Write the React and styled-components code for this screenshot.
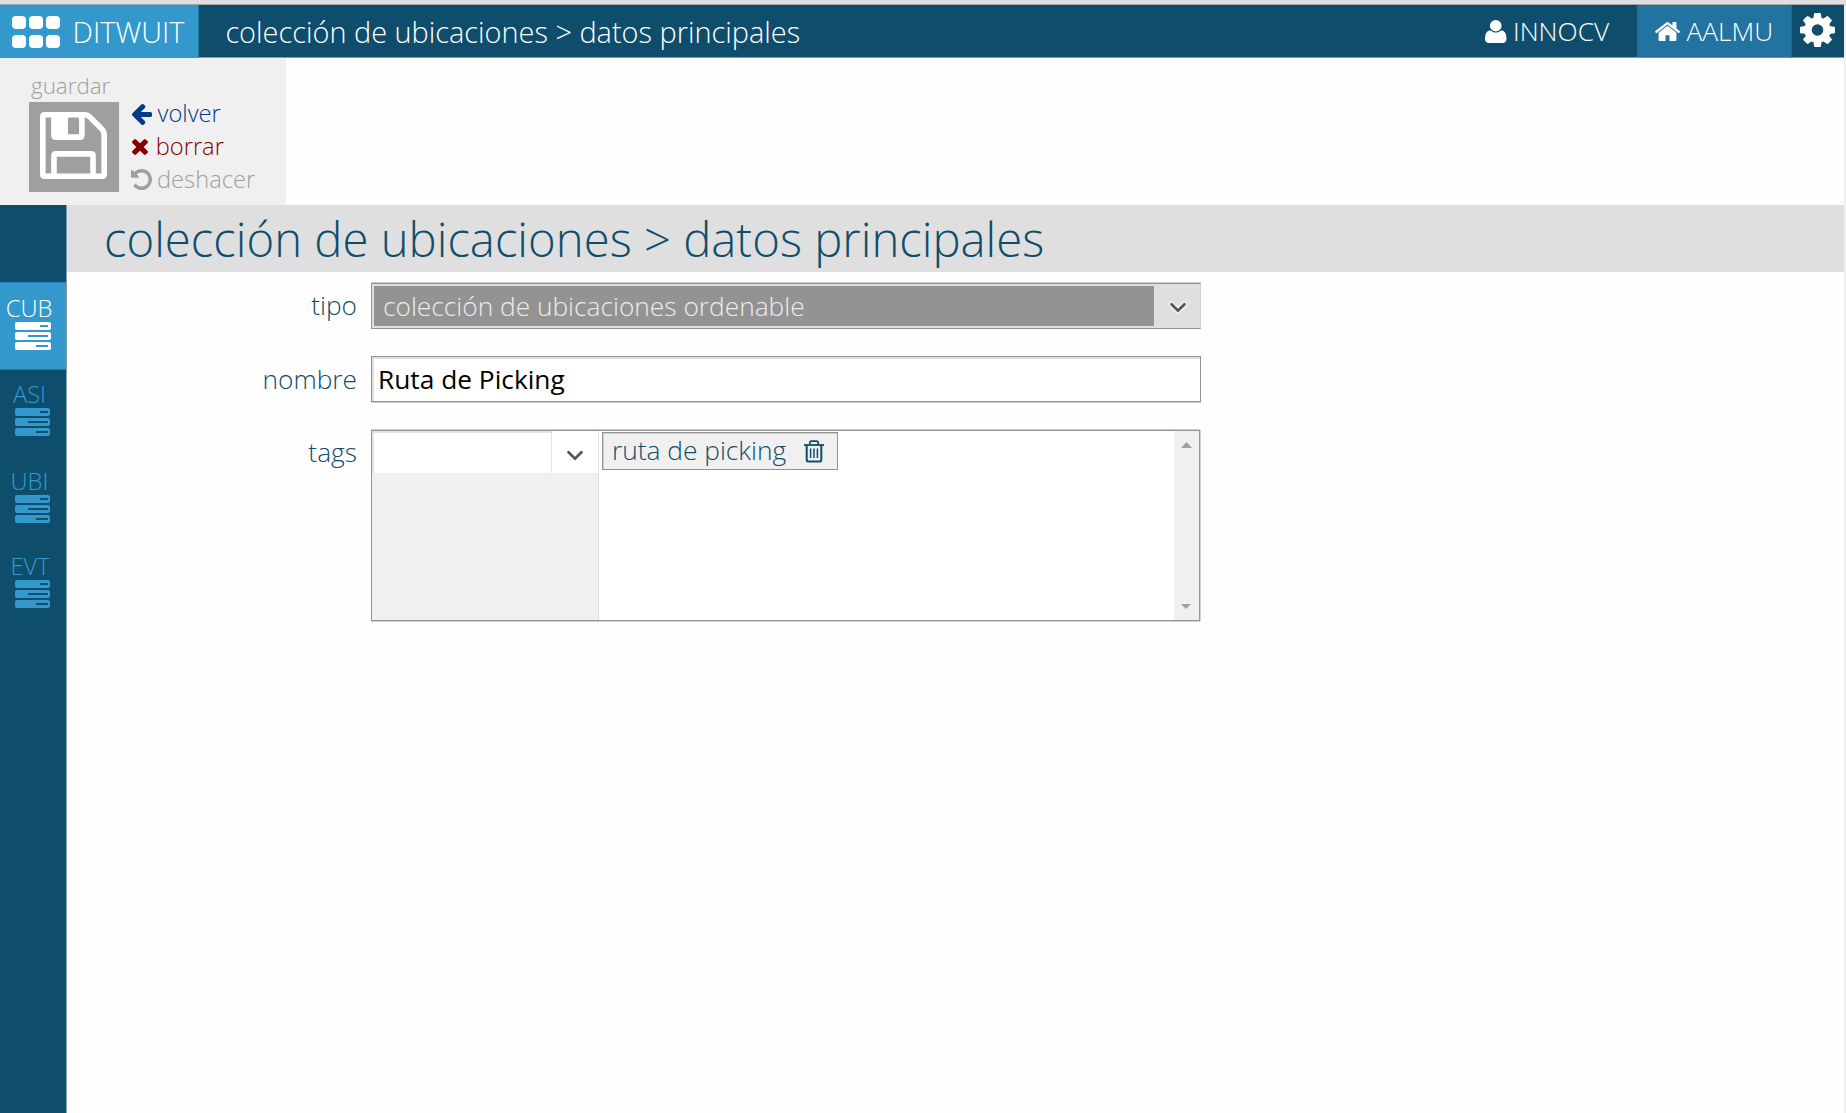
import React from 'react';
import styled, { createGlobalStyle } from 'styled-components';

const navy = '#0f4d6d';
const sky = '#3399cc';

const GlobalStyle = createGlobalStyle`
  *, *::before, *::after { box-sizing: border-box; }
  html, body { margin: 0; padding: 0; }
  body {
    background: #fff;
    font-family: "Open Sans", "Noto Sans", sans-serif;
    font-weight: 300;
    overflow: hidden;
  }
  svg { display: block; flex: none; }
`;

const Page = styled.div`
  display: flex;
  flex-direction: column;
  width: 1846px;
  height: 1113px;
  border-top: 4px solid #dfdfdf;
  background: #fefefe;
`;

const Shell = styled.div`
  flex: 1;
  display: flex;
  flex-direction: column;
  border-top: 1px solid #a3a7a9;
  border-right: 2px solid #f0f0f0;
  min-height: 0;
`;

const Header = styled.header`
  display: flex;
  height: 53px;
  color: #fff;
  background: linear-gradient(${navy} 52px, #7f9eae 52px);
  white-space: nowrap;
`;

const Brand = styled.div`
  display: flex;
  width: 199px;
  padding-left: 12px;
  background: ${sky};
  border-right: 1px solid #257aa4;
  font-size: 28.9px;
  line-height: 53px;
`;

const AppGrid = styled.div`
  display: grid;
  grid-template-columns: repeat(3, 14px);
  grid-auto-rows: 13.4px;
  gap: 5.6px 3px;
  margin: 10.6px 12.6px 0 0;
`;

const AppDot = styled.span`
  border-radius: 4px;
  background: #fff;
`;

const Crumb = styled.div`
  flex: 1;
  padding-left: 26.4px;
  font-size: 28.9px;
  line-height: 53px;
`;

const HeaderItem = styled.div`
  display: flex;
  width: ${p => p.$width}px;
  padding-left: ${p => p.$pad}px;
  gap: ${p => p.$gap || 0}px;
  font-size: 26.3px;
  line-height: 52px;
  ${p => p.$active && `
    background: #22739f;
    border-right: 1px solid #1d658c;
    border-bottom: 1px solid #5e95b2;
  `}
`;

const IconBox = styled.span`
  display: block;
  padding-top: ${p => p.$top}px;
`;

const Toolbar = styled.section`
  display: flex;
  gap: 12px;
  width: 286px;
  height: 147px;
  padding-left: 29px;
  background: #f0f0f0;
`;

const SaveColumn = styled.div`
  padding-top: 11px;
  color: #9f9f9f;
  font-size: 22.4px;
  line-height: 33px;
`;

const SaveLabel = styled.div`
  padding-left: 2px;
`;

const SaveTile = styled.div`
  display: flex;
  justify-content: center;
  width: 90px;
  height: 90px;
  padding: 10px 1px 0 0;
  background: #9f9f9f;
  color: #fff;
`;

const Actions = styled.div`
  display: flex;
  flex-direction: column;
  padding-top: 39px;
`;

const Action = styled.div`
  display: flex;
  align-items: center;
  height: 33px;
  color: ${p => p.$color};
  font-size: 23.7px;
  line-height: 33px;
`;

const ActionIcon = styled.span`
  display: flex;
  width: ${p => p.$width}px;
  padding: ${p => p.$top || 0}px 0 0 ${p => p.$left || 0}px;
`;

const Body = styled.div`
  flex: 1;
  display: flex;
  min-height: 0;
`;

const Nav = styled.nav`
  width: 67px;
  padding-top: 77px;
  background: ${navy};
  border-right: 1px solid #7c9eae;
`;

const NavItem = styled.div`
  height: ${p => p.$height}px;
  padding-top: 10px;
  color: ${p => (p.$active ? '#fff' : sky)};
  background: ${p => (p.$active ? sky : 'transparent')};
  box-shadow: ${p => (p.$active ? 'inset 0 1px #2887b6, inset 0 -1px #2478a4' : 'none')};
  margin-bottom: ${p => (p.$active ? -2 : 0)}px;
`;

const NavLabel = styled.div`
  width: ${p => p.$width}px;
  text-align: center;
  font-size: 23.7px;
  line-height: 32px;
  height: 30px;
`;

const ServerStack = styled.div`
  display: flex;
  flex-direction: column;
  gap: 2px;
  width: 36px;
  margin-left: ${p => (p.$active ? 14.5 : 15)}px;
`;

const ServerBar = styled.span`
  display: flex;
  justify-content: flex-end;
  align-items: center;
  height: 8px;
  width: ${p => (p.$active ? 36 : 35)}px;
  padding-right: ${p => (p.$active ? 3 : 2)}px;
  border-radius: 2px;
  background: currentColor;
`;

const ServerSlot = styled.i`
  width: ${p => p.$width}px;
  height: 2px;
  background: ${p => (p.$active ? sky : navy)};
`;

const Main = styled.main`
  flex: 1;
  min-width: 0;
`;

const Title = styled.h1`
  margin: 0;
  height: 67px;
  padding-left: 37px;
  background: #dfdfdf;
  color: ${navy};
  font-size: 47.27px;
  font-weight: 300;
  line-height: 67px;
  white-space: nowrap;
`;

const Form = styled.div`
  display: grid;
  grid-template-columns: 290px 830px;
  column-gap: 14px;
  row-gap: 27px;
  padding-top: 10px;
`;

const Label = styled.label`
  color: ${navy};
  font-size: 26.3px;
  line-height: 46px;
  text-align: right;
`;

const Select = styled.div`
  display: flex;
  height: 46px;
  margin-top: 1px;
  border: 1px solid #939393;
  border-right-color: #d0d0d0;
  box-shadow: 0 -1px #cfcfcf;
  background: #dfdfdf;
`;

const SelectValue = styled.div`
  width: 780px;
  height: 40px;
  margin: 2px 0 0 2px;
  padding-left: 9px;
  background: #939393;
  color: #ececec;
  font-size: 26.3px;
  line-height: 41px;
`;

const SelectArrow = styled.div`
  display: flex;
  flex: 1;
  justify-content: center;
  padding: 17px 0 0 1px;
`;

const Field = styled.div`
  height: 46px;
  border: 1px solid #939393;
  box-shadow: inset 2px 2px #dfdfdf, 0 1px #d0d0d0;
  padding-left: 6px;
  color: #000;
  background: #fff;
  font-size: 26.3px;
  font-weight: 400;
  line-height: 44px;
`;

const TagBox = styled.div`
  display: flex;
  width: 829px;
  height: 191px;
  margin-top: 1px;
  border: 1px solid #939393;
  box-shadow: 0 -1px #cfcfcf, 0 1px #d0d0d0, 1px 0 #d0d0d0;
  background: #fff;
`;

const TagPicker = styled.div`
  width: 227px;
  background: #f0f0f0;
  border-right: 1px solid #dfdfdf;
`;

const TagCombo = styled.div`
  display: flex;
  height: 42px;
  background: #fff;
`;

const TagInput = styled.div`
  width: 180px;
  border: solid #e3e3e3;
  border-width: 2px 1px 0 2px;
`;

const TagArrow = styled.div`
  display: flex;
  flex: 1;
  justify-content: center;
  padding-top: 17.6px;
`;

const TagList = styled.div`
  flex: 1;
  padding: 1px 0 0 3px;
`;

const Tag = styled.div`
  display: flex;
  justify-content: space-between;
  width: 236px;
  height: 38px;
  padding: 0 13px 0 9px;
  border: 1px solid #939393;
  box-shadow: inset 1px 1px #cfcfcf;
  background: #f0f0f0;
  color: ${navy};
  font-size: 26.3px;
  line-height: 34px;
`;

const ScrollTrack = styled.div`
  display: flex;
  flex-direction: column;
  justify-content: space-between;
  align-items: center;
  width: 25px;
  padding: 11px 1px 11px 0;
  background: #f0f0f0;
`;

const shapes = {
  arrow: ['192 181 1472 1558', 'M1664 896v128q0 53-32.5 90.5t-84.5 37.5h-704l293 294q38 36 38 90t-38 90l-75 76q-37 37-90 37-52 0-91-37l-651-652q-37-37-37-90 0-52 37-91l651-650q38-38 91-38 52 0 90 38l75 74q38 38 38 91t-38 91l-293 293h704q52 0 84.5 37.5t32.5 90.5z'],
  times: ['302 366 1188 1188', 'M1490 1322q0 40-28 68l-136 136q-28 28-68 28t-68-28l-294-294-294 294q-28 28-68 28t-68-28l-136-136q-28-28-28-68t28-68l294-294-294-294q-28-28-28-68t28-68l136-136q28-28 68-28t68 28l294 294 294-294q28-28 68-28t68 28l136 136q28 28 28 68t-28 68l-294 294 294 294q28 28 28 68z'],
  undo: ['128 128 1536 1536', 'M1664 896q0 156-61 298t-164 245-245 164-298 61q-172 0-327-72.5t-264-204.5q-7-10-6.5-22.5t8.5-20.5l137-138q10-9 25-9 16 2 23 12 73 95 179 147t225 52q104 0 198.5-40.5t163.5-109.5 109.5-163.5 40.5-198.5-40.5-198.5-109.5-163.5-163.5-109.5-198.5-40.5q-98 0-188 35.5t-160 101.5l137 138q31 30 14 69-17 40-59 40h-448q-26 0-45-19t-19-45v-448q0-42 40-59 39-17 69 14l130 129q107-101 244.5-156.5t284.5-55.5q156 0 298 61t245 164 164 245 61 298z'],
  floppy: ['128 128 1536 1536', 'M512 1536h768v-384h-768v384zm896 0h128v-896q0-14-10-38.5t-20-34.5l-281-281q-10-10-34-20t-39-10v416q0 40-28 68t-68 28h-576q-40 0-68-28t-28-68v-416h-128v1280h128v-416q0-40 28-68t68-28h832q40 0 68 28t28 68v416zm-384-928v-320q0-13-9.5-22.5t-22.5-9.5h-192q-13 0-22.5 9.5t-9.5 22.5v320q0 13 9.5 22.5t22.5 9.5h192q13 0 22.5-9.5t9.5-22.5zm640 32v928q0 40-28 68t-68 28h-1344q-40 0-68-28t-28-68v-1344q0-40 28-68t68-28h928q40 0 88 20t76 48l280 280q28 28 48 76t20 88z'],
  home: ['89 250 1614 1286', 'M1472 992v480q0 26-19 45t-45 19h-384v-384h-256v384h-384q-26 0-45-19t-19-45v-480q0-1 .5-3t.5-3l575-474 575 474q1 2 1 6zm223-69l-62 74q-8 9-21 11h-3q-13 0-21-7l-692-577-692 577q-12 8-24 7-13-2-21-11l-62-74q-8-10-7-23.5t11-21.5l719-599q32-26 76-26t76 26l244 204v-195q0-14 9-23t23-9h192q14 0 23 9t9 23v408l219 182q10 8 11 21.5t-7 23.5z'],
  cog: ['128 128 1536 1536', 'M1152 896q0-106-75-181t-181-75-181 75-75 181 75 181 181 75 181-75 75-181zm512-109v222q0 12-8 23t-20 13l-185 28q-19 54-39 91 35 50 107 138 10 12 10 25t-9 23q-27 37-99 108t-94 71q-12 0-26-9l-138-108q-44 23-91 38-16 136-29 186-7 28-36 28h-222q-14 0-24.5-8.5t-11.5-21.5l-28-184q-49-16-90-37l-141 107q-10 9-25 9-14 0-25-11-126-114-165-168-7-10-7-23 0-12 8-23 15-21 51-66.5t54-70.5q-27-50-41-99l-183-27q-13-2-21-12.5t-8-23.5v-222q0-12 8-23t19-13l186-28q14-46 39-92-40-57-107-138-10-12-10-24 0-10 9-23 26-36 98.5-107.5t94.5-71.5q13 0 26 10l138 107q44-23 91-38 16-136 29-186 7-28 36-28h222q14 0 24.5 8.5t11.5 21.5l28 184q49 16 90 37l142-107q9-9 24-9 13 0 25 10 129 119 165 170 7 8 7 22 0 12-8 23-15 21-51 66.5t-54 70.5q26 50 41 98l183 28q13 2 21 12.5t8 23.5z'],
};

const Icon = ({ name, width, height }) => (
  <svg width={width} height={height} viewBox={shapes[name][0]} preserveAspectRatio="none" fill="currentColor">
    <path d={shapes[name][1]} />
  </svg>
);

const UserIcon = () => (
  <svg width="21.5" height="23" viewBox="0 0 1408 1536" preserveAspectRatio="none" fill="currentColor">
    <path transform="translate(0 1408) scale(1 -1)" d="M1408 131q0-120-73-189.5t-194-69.5h-874q-121 0-194 69.5t-73 189.5q0 53 3.5 103.5t14 109t26.5 108.5t43 97.5t62 81t85.5 53.5t111.5 20q9 0 42-21.5t74.5-48t108-48t133.5-21.5t133.5 21.5t108 48t74.5 48t42 21.5q61 0 111.5-20t85.5-53.5t62-81t43-97.5t26.5-108.5t14-109t3.5-103.5zM1088 1024q0-159-112.5-271.5t-271.5-112.5t-271.5 112.5t-112.5 271.5t112.5 271.5t271.5 112.5t271.5-112.5t112.5-271.5z" />
  </svg>
);

const Chevron = ({ halo }) => (
  <svg width="20" height="14" viewBox="0 0 20 14" fill="none" strokeLinecap="round">
    {halo && <path d="M3.2 3.2L10 9.8L16.8 3.2" stroke="#f4f4f4" strokeWidth="5.5" />}
    <path d="M3.5 3.2L10 9.6L16.5 3.2" stroke="#555" strokeWidth="2.7" />
  </svg>
);

const Trash = () => (
  <svg width="20" height="23" viewBox="0 0 20 23" fill="none" stroke="currentColor">
    <path d="M0 5H20" strokeWidth="1.8" />
    <path d="M5.8 4.5V3Q5.8 1.2 7.6 1.2H12.4Q14.2 1.2 14.2 3V4.5" strokeWidth="1.7" />
    <path d="M2.7 5V19.4Q2.7 21.6 4.9 21.6H15.1Q17.3 21.6 17.3 19.4V5" strokeWidth="2" />
    <path d="M6.6 8.5V18M10 8.5V18M13.4 8.5V18" strokeWidth="1.5" />
  </svg>
);

const navItems = [
  { label: 'CUB', height: 88, width: 58, active: true },
  { label: 'ASI', height: 87, width: 59 },
  { label: 'UBI', height: 85, width: 59 },
  { label: 'EVT', height: 87, width: 60 },
];

export default function App() {
  return (
    <Page>
      <GlobalStyle />
      <Shell>
        <Header>
          <Brand>
            <AppGrid>
              {[0, 1, 2, 3, 4, 5].map(n => <AppDot key={n} />)}
            </AppGrid>
            DITWUIT
          </Brand>
          <Crumb>colección de ubicaciones &gt; datos principales</Crumb>
          <HeaderItem $width={152} $pad={0} $gap={6.5}>
            <IconBox $top={15}><UserIcon /></IconBox>
            INNOCV
          </HeaderItem>
          <HeaderItem $width={155} $pad={18} $gap={6.4} $active>
            <IconBox $top={17}><Icon name="home" width={25} height={19} /></IconBox>
            AALMU
          </HeaderItem>
          <HeaderItem $width={52} $pad={8}>
            <IconBox $top={8}><Icon name="cog" width={35} height={34} /></IconBox>
          </HeaderItem>
        </Header>
        <Toolbar>
          <SaveColumn>
            <SaveLabel>guardar</SaveLabel>
            <SaveTile><Icon name="floppy" width={67} height={67} /></SaveTile>
          </SaveColumn>
          <Actions>
            <Action $color="#003c87">
              <ActionIcon $width={26.5} $left={0.5} $top={1}><Icon name="arrow" width={20} height={21} /></ActionIcon>
              volver
            </Action>
            <Action $color="#870000">
              <ActionIcon $width={24.7} $left={1} $top={1}><Icon name="times" width={16} height={16} /></ActionIcon>
              borrar
            </Action>
            <Action $color="#9f9f9f">
              <ActionIcon $width={26} $top={0}><Icon name="undo" width={21} height={21} /></ActionIcon>
              deshacer
            </Action>
          </Actions>
        </Toolbar>
        <Body>
          <Nav>
            {navItems.map(item => (
              <NavItem key={item.label} $height={item.height} $active={item.active}>
                <NavLabel $width={item.width}>{item.label}</NavLabel>
                <ServerStack $active={item.active}>
                  {[8, 20, 12].map(w => (
                    <ServerBar key={w} $active={item.active}>
                      <ServerSlot $width={w} $active={item.active} />
                    </ServerBar>
                  ))}
                </ServerStack>
              </NavItem>
            ))}
          </Nav>
          <Main>
            <Title>colección de ubicaciones &gt; datos principales</Title>
            <Form>
              <Label>tipo</Label>
              <Select>
                <SelectValue>colección de ubicaciones ordenable</SelectValue>
                <SelectArrow><Chevron halo /></SelectArrow>
              </Select>
              <Label>nombre</Label>
              <Field>Ruta de Picking</Field>
              <Label>tags</Label>
              <TagBox>
                <TagPicker>
                  <TagCombo>
                    <TagInput />
                    <TagArrow><Chevron /></TagArrow>
                  </TagCombo>
                </TagPicker>
                <TagList>
                  <Tag>
                    ruta de picking
                    <IconBox $top={6.5}><Trash /></IconBox>
                  </Tag>
                </TagList>
                <ScrollTrack>
                  <svg width="11" height="6" viewBox="0 0 11 6" fill="#9f9f9f"><path d="M0 6L5.5 0L11 6Z" /></svg>
                  <svg width="10" height="5" viewBox="0 0 10 5" fill="#9f9f9f"><path d="M0 0H10L5 5Z" /></svg>
                </ScrollTrack>
              </TagBox>
            </Form>
          </Main>
        </Body>
      </Shell>
    </Page>
  );
}
